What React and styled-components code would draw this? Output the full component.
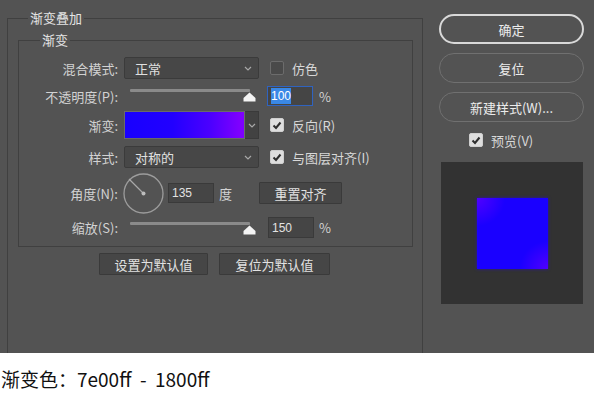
import React from 'react';
import styled, { createGlobalStyle } from 'styled-components';

const Global = createGlobalStyle`
  html, body { margin: 0; padding: 0; background: #fff; }
  body { font-family: "Noto Sans CJK SC", "Noto Sans", sans-serif; }
`;

const Panel = styled.div`
  width: 594px;
  height: 353px;
  box-sizing: border-box;
  background: #535353;
  display: flex;
  padding: 10px 0 0 7px;
  overflow: hidden;
  color: #d6d6d6;
  font-size: 13px;
`;

const Group = styled.fieldset`
  box-sizing: border-box;
  margin: ${p => p.$margin || '0'};
  padding: ${p => p.$padding || '0'};
  width: ${p => p.$width}px;
  height: ${p => p.$height}px;
  border: 1px solid #404040;
  ${p => p.$open ? 'border-bottom: none;' : ''}
  min-width: 0;
`;

const Legend = styled.legend`
  margin-left: ${p => p.$offset}px;
  padding: 0 2px;
  line-height: 16px;
  font-size: 13px;
  color: #e4e4e4;
`;

const Row = styled.div`
  display: flex;
  align-items: center;
  height: ${p => p.$h}px;
  margin-top: ${p => p.$gap || 0}px;
`;

const Label = styled.div`
  width: 99px;
  margin-right: 6px;
  text-align: right;
  white-space: nowrap;
  color: #d2d2d2;
`;

const Select = styled.div`
  box-sizing: border-box;
  width: 135px;
  height: 22px;
  display: flex;
  align-items: center;
  justify-content: space-between;
  padding: 0 6px 0 10px;
  background: #474747;
  border: 1px solid #3b3b3b;
  border-radius: 2px;
  color: #e0e0e0;
`;

const Chevron = () => (
  <svg width="8" height="5" viewBox="0 0 8 5">
    <polyline points="1,1 4,4 7,1" fill="none" stroke="#a8a8a8" strokeWidth="1.2" />
  </svg>
);

const Box = styled.div`
  box-sizing: border-box;
  width: 14px;
  height: 14px;
  margin-left: ${p => p.$ml || 0}px;
  border-radius: 2px;
  display: flex;
  align-items: center;
  justify-content: center;
  background: ${p => p.$on ? '#dedede' : '#4a4a4a'};
  border: 1px solid ${p => p.$on ? '#cfcfcf' : '#6c6c6c'};
`;

const CheckText = styled.span`
  margin-left: 8px;
  color: #d8d8d8;
  white-space: nowrap;
`;

const Check = ({ on, ml, children }) => (
  <>
    <Box $on={on} $ml={ml}>
      {on && (
        <svg width="10" height="9" viewBox="0 0 10 9">
          <polyline points="1.5,4.5 4,7 8.5,1.5" fill="none" stroke="#2e2e2e" strokeWidth="2" />
        </svg>
      )}
    </Box>
    <CheckText>{children}</CheckText>
  </>
);

const SliderWrap = styled.div`
  position: relative;
  width: 135px;
  align-self: stretch;
`;

const Track = styled.div`
  margin: ${p => p.$top}px 9px 0 6px;
  height: 3px;
  background: #8a8a8a;
  border-radius: 1px;
`;

const Thumb = styled.svg`
  position: absolute;
  right: 3px;
  top: ${p => p.$top}px;
`;

const Slider = ({ top }) => (
  <SliderWrap>
    <Track $top={top} />
    <Thumb $top={top + 3} width="13" height="10" viewBox="0 0 13 10">
      <path d="M6.5 0.5 L12.5 6 L12.5 9.5 L0.5 9.5 L0.5 6 Z" fill="#f4f4f4" />
    </Thumb>
  </SliderWrap>
);

const Field = styled.div`
  box-sizing: border-box;
  width: 46px;
  height: ${p => p.$h || 20}px;
  margin-left: ${p => p.$ml}px;
  padding-left: 3px;
  display: flex;
  align-items: center;
  background: #454545;
  border: 1px solid ${p => p.$focus ? '#2f63c0' : '#3a3a3a'};
  color: #e2e2e2;
  font-family: "Liberation Sans", "Noto Sans CJK SC", sans-serif;
  font-size: 12px;
`;

const Selected = styled.span`
  background: #3a88e6;
  color: #fff;
  padding: 1px 0;
`;

const Unit = styled.span`
  margin-left: ${p => p.$ml}px;
  color: #d2d2d2;
`;

const GradientBox = styled.div`
  box-sizing: border-box;
  width: 121px;
  height: 28px;
  border: 1px solid #6a6a6a;
  background: linear-gradient(90deg, #1800ff 0%, #2200ff 40%, #4c00ff 72%, #7e00ff 96%);
`;

const GradientDrop = styled.div`
  box-sizing: border-box;
  width: 14px;
  height: 28px;
  display: flex;
  align-items: center;
  justify-content: center;
  background: #424242;
  border: 1px solid #3a3a3a;
  border-left: none;
`;

const Dial = styled.svg`
  margin-left: -1px;
`;

const Button = styled.div`
  box-sizing: border-box;
  width: ${p => p.$w}px;
  height: 22px;
  margin-left: ${p => p.$ml || 0}px;
  display: flex;
  align-items: center;
  justify-content: center;
  background: #464646;
  border: 1px solid #3a3a3a;
  border-radius: 1px;
  color: #e2e2e2;
`;

const Inner = styled.div`
  padding-top: 9px;
`;

const Footer = styled.div`
  display: flex;
  margin: 6px 0 0 91px;
`;

const Side = styled.div`
  width: 145px;
  margin-left: 16px;
  padding-top: 4px;
  display: flex;
  flex-direction: column;
`;

const Pill = styled.div`
  box-sizing: border-box;
  height: 30px;
  margin-top: ${p => p.$gap || 0}px;
  border-radius: 15px;
  border: ${p => p.$primary ? '2px solid #d9d9d9' : '1.5px solid #707070'};
  display: flex;
  align-items: center;
  justify-content: center;
  color: #ececec;
  font-size: 13px;
`;

const PreviewRow = styled.div`
  display: flex;
  align-items: center;
  height: 14px;
  margin: 11px 0 0 30px;
`;

const Preview = styled.div`
  width: 142px;
  height: 142px;
  margin: 15px 0 0 2px;
  background: #323232;
  display: flex;
  align-items: center;
  justify-content: center;
`;

const Swatch = styled.div`
  width: 71px;
  height: 71px;
  background:
    radial-gradient(circle at 0% 0%, rgba(126, 0, 255, 0.55), rgba(126, 0, 255, 0) 28%),
    radial-gradient(circle at 100% 100%, rgba(126, 0, 255, 0.55), rgba(126, 0, 255, 0) 28%),
    #1a00ff;
  box-shadow: 0 0 3px rgba(40, 0, 255, 0.6);
`;

const Caption = styled.div`
  height: 40px;
  padding: 14px 0 0 1px;
  box-sizing: border-box;
  font-size: 19px;
  line-height: 24px;
  color: #111;
  white-space: pre;
`;

export default function App() {
  return (
    <>
      <Global />
      <Panel>
        <Group $width={416} $height={343} $open>
          <Legend $offset={20}>渐变叠加</Legend>
          <Group $width={395} $height={215} $margin="6px 9px 0 10px">
            <Legend $offset={21}>渐变</Legend>
            <Inner>
              <Row $h={22}>
                <Label>混合模式:</Label>
                <Select>正常<Chevron /></Select>
                <Check ml={11}>仿色</Check>
              </Row>
              <Row $h={20} $gap={7}>
                <Label>不透明度(P):</Label>
                <Slider top={3} />
                <Field $ml={8} $focus><Selected>100</Selected></Field>
                <Unit $ml={6}>%</Unit>
              </Row>
              <Row $h={28} $gap={5}>
                <Label>渐变:</Label>
                <GradientBox />
                <GradientDrop><Chevron /></GradientDrop>
                <Check on ml={11}>反向(R)</Check>
              </Row>
              <Row $h={22} $gap={7}>
                <Label>样式:</Label>
                <Select>对称的<Chevron /></Select>
                <Check on ml={11}>与图层对齐(I)</Check>
              </Row>
              <Row $h={40} $gap={5}>
                <Label>角度(N):</Label>
                <Dial width="41" height="41" viewBox="0 0 41 41">
                  <circle cx="20.5" cy="20.5" r="19.5" fill="none" stroke="#9c9c9c" strokeWidth="1.3" />
                  <line x1="20.5" y1="20.5" x2="6" y2="6" stroke="#a8a8a8" strokeWidth="1.3" />
                  <circle cx="20.5" cy="20.5" r="2" fill="#bdbdbd" />
                </Dial>
                <Field $ml={4}>135</Field>
                <Unit $ml={5}>度</Unit>
                <Button $w={83} $ml={27}>重置对齐</Button>
              </Row>
              <Row $h={21} $gap={4}>
                <Label>缩放(S):</Label>
                <Slider top={5} />
                <Field $ml={9} $h={21}>150</Field>
                <Unit $ml={5}>%</Unit>
              </Row>
            </Inner>
          </Group>
          <Footer>
            <Button $w={109}>设置为默认值</Button>
            <Button $w={111} $ml={11}>复位为默认值</Button>
          </Footer>
        </Group>
        <Side>
          <Pill $primary>确定</Pill>
          <Pill $gap={9}>复位</Pill>
          <Pill $gap={9}>新建样式(W)...</Pill>
          <PreviewRow>
            <Check on>预览(V)</Check>
          </PreviewRow>
          <Preview><Swatch /></Preview>
        </Side>
      </Panel>
      <Caption>{'渐变色：7e00ff  -  1800ff'}</Caption>
    </>
  );
}
